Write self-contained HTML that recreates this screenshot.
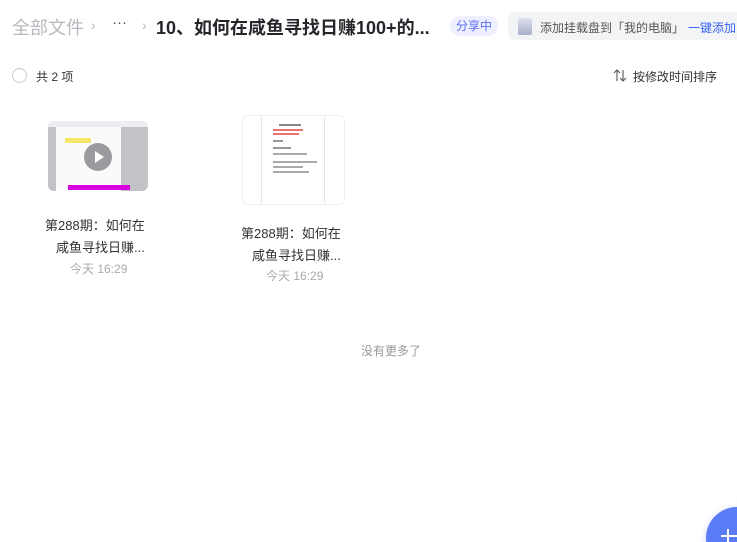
<!DOCTYPE html>
<html><head><meta charset="utf-8"><style>
*{margin:0;padding:0;box-sizing:border-box}
html,body{width:737px;height:542px;overflow:hidden;background:#fff;font-family:"Liberation Sans","Noto Sans CJK SC",sans-serif;position:relative;color:#25262b}
.a{position:absolute;white-space:nowrap}
</style></head><body>
<div class="a" style="left:12px;top:14px;font-size:18px;color:#b7b9be">全部文件</div>
<div class="a" style="left:91px;top:17px;font-size:14px;color:#b7b9be">›</div>
<div class="a" style="left:112px;top:14px;font-size:15px;color:#555">···</div>
<div class="a" style="left:142px;top:17px;font-size:14px;color:#b7b9be">›</div>
<div class="a" style="left:156px;top:14px;font-size:18px;font-weight:bold;color:#25262b">10、如何在咸鱼寻找日赚100+的...</div>
<div class="a" style="left:450px;top:16px;width:48px;height:20px;border-radius:10px;background:#eef0ff;color:#5b6cf0;font-size:12px;line-height:20px;text-align:center">分享中</div>
<div class="a" style="left:508px;top:12px;width:240px;height:28px;border-radius:6px;background:#f3f4f6"></div>
<div class="a" style="left:518px;top:18px;width:14px;height:17px;border-radius:2px;background:linear-gradient(#e0e2ee,#a9aecb);"></div>
<div class="a" style="left:540px;top:19px;font-size:12px;color:#555">添加挂载盘到「我的电脑」</div>
<div class="a" style="left:688px;top:19px;font-size:12px;color:#3a64f5">一键添加</div>
<div class="a" style="left:12px;top:68px;width:15px;height:15px;border-radius:50%;border:1px solid #c9cbd0"></div>
<div class="a" style="left:36px;top:68px;font-size:12px;color:#333">共 2 项</div>
<svg class="a" style="left:613px;top:69px" width="14" height="13" viewBox="0 0 14 13"><path d="M4 12V1M1 4l3-3 3 3M10 1v11M7 9l3 3 3-3" fill="none" stroke="#555" stroke-width="1.1"/></svg>
<div class="a" style="left:633px;top:68px;font-size:12px;color:#333">按修改时间排序</div>

<div class="a" style="left:48px;top:121px;width:100px;height:70px;border-radius:6px;overflow:hidden;background:#c2c3c7">
 <div style="position:absolute;left:8px;top:5px;width:65px;height:65px;background:#fafafa"></div>
 <div style="position:absolute;left:0;top:0;width:100px;height:6px;background:#eceef2"></div>
 <div style="position:absolute;left:17px;top:17px;width:26px;height:5px;background:#f5e66b"></div>
 <div style="position:absolute;left:20px;top:64px;width:62px;height:5px;background:#d800e0"></div>
 <div style="position:absolute;left:36px;top:22px;width:28px;height:28px;border-radius:50%;background:#9a9b9e"></div>
 <div style="position:absolute;left:47px;top:30px;border-left:9px solid #fff;border-top:6px solid transparent;border-bottom:6px solid transparent"></div>
</div>
<div class="a" style="left:45px;top:215px;font-size:13px;color:#333">第288期：如何在</div>
<div class="a" style="left:56px;top:237px;font-size:13px;color:#333">咸鱼寻找日赚...</div>
<div class="a" style="left:70px;top:260px;font-size:12px;color:#aaa">今天 16:29</div>

<div class="a" style="left:242px;top:115px;width:103px;height:90px;border:1px solid #eceef2;border-radius:6px"></div>
<div class="a" style="left:261px;top:116px;width:64px;height:88px;border-left:1px solid #e6e6e6;border-right:1px solid #e6e6e6;background:#fff">
 <div style="position:absolute;left:17px;top:8px;width:22px;height:2px;background:#888"></div>
 <div style="position:absolute;left:11px;top:13px;width:30px;height:2px;background:#f07070"></div>
 <div style="position:absolute;left:11px;top:17px;width:26px;height:2px;background:#f07070"></div>
 <div style="position:absolute;left:11px;top:24px;width:10px;height:2px;background:#999"></div>
 <div style="position:absolute;left:11px;top:31px;width:18px;height:2px;background:#999"></div>
 <div style="position:absolute;left:11px;top:37px;width:34px;height:2px;background:#aaa"></div>
 <div style="position:absolute;left:11px;top:45px;width:44px;height:2px;background:#aaa"></div>
 <div style="position:absolute;left:11px;top:50px;width:30px;height:2px;background:#aaa"></div>
 <div style="position:absolute;left:11px;top:55px;width:36px;height:2px;background:#aaa"></div>
</div>
<div class="a" style="left:241px;top:223px;font-size:13px;color:#333">第288期：如何在</div>
<div class="a" style="left:252px;top:245px;font-size:13px;color:#333">咸鱼寻找日赚...</div>
<div class="a" style="left:266px;top:267px;font-size:12px;color:#aaa">今天 16:29</div>

<div class="a" style="left:361px;top:342px;font-size:12px;color:#999">没有更多了</div>
<div class="a" style="left:706px;top:507px;width:62px;height:62px;border-radius:50%;background:#5b7cf7;box-shadow:0 2px 8px rgba(91,124,247,.3)"></div>
<div class="a" style="left:727px;top:529px;width:2px;height:14px;background:#fff"></div>
<div class="a" style="left:721px;top:535px;width:16px;height:2px;background:#fff"></div>
</body></html>
